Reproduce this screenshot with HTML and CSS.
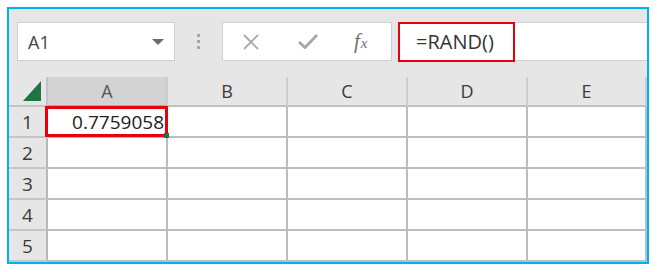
FILE: index.html
```html
<!DOCTYPE html>
<html lang="en">
<head>
    <meta charset="UTF-8">
    <meta name="viewport" content="width=device-width, initial-scale=1.0">
    <title>RAND</title>
    <link rel="stylesheet" href="styles.css">
</head>
<body>
    <div class="frame">
        <div class="toolbar">
            <div class="namebox">
                <span>A1</span>
                <svg width="12" height="6" viewBox="0 0 12 6"><path d="M0 0 H12 L6 6 Z" fill="#6a6a6a"/></svg>
            </div>
            <div class="grip"><i></i><i></i><i></i></div>
            <div class="fbuttons">
                <svg class="icon-x" width="16" height="16" viewBox="0 0 16 16"><path d="M1 1 L15 15 M15 1 L1 15" stroke="#a8a8a8" stroke-width="1.8" fill="none"/></svg>
                <svg class="icon-ok" width="20" height="15" viewBox="0 0 20 15"><path d="M1 8 L7 13.5 L19 1" stroke="#a8a8a8" stroke-width="3" fill="none"/></svg>
                <span class="fx"><i>f</i><i class="x">x</i></span>
            </div>
            <div class="formula">
                <div class="formula-text">=RAND()</div>
            </div>
        </div>

        <div class="sheet">
            <div class="corner">
                <svg width="18" height="20" viewBox="0 0 18 20"><path d="M18 0 V20 H0 Z" fill="#217346"/></svg>
            </div>
            <div class="colhead selected">A</div>
            <div class="colhead">B</div>
            <div class="colhead">C</div>
            <div class="colhead">D</div>
            <div class="colhead">E</div>

            <div class="rowhead">1</div>
            <div class="cell active">0.7759058<span class="selection"><b></b></span></div>
            <div class="cell"></div><div class="cell"></div><div class="cell"></div><div class="cell"></div>

            <div class="rowhead">2</div>
            <div class="cell"></div><div class="cell"></div><div class="cell"></div><div class="cell"></div><div class="cell"></div>

            <div class="rowhead">3</div>
            <div class="cell"></div><div class="cell"></div><div class="cell"></div><div class="cell"></div><div class="cell"></div>

            <div class="rowhead">4</div>
            <div class="cell"></div><div class="cell"></div><div class="cell"></div><div class="cell"></div><div class="cell"></div>

            <div class="rowhead">5</div>
            <div class="cell"></div><div class="cell"></div><div class="cell"></div><div class="cell"></div><div class="cell"></div>
        </div>
    </div>
</body>
</html>
```

FILE: styles.css
```css
body {
    margin: 0;
    background: #fff;
    font-family: "Open Sans", "Noto Sans", sans-serif;
    color: #333;
}

.frame {
    margin: 7px 0 0 7px;
    width: 642px;
    height: 257px;
    border: 2px solid #00b0f0;
    box-sizing: border-box;
    background: #e6e6e6;
    overflow: hidden;
}

.toolbar {
    display: flex;
    align-items: flex-start;
    height: 68px;
    padding: 13px 0 0 8px;
    box-sizing: border-box;
}

.namebox {
    width: 158px;
    height: 39px;
    box-sizing: border-box;
    border: 1px solid #d0d0d0;
    background: #fff;
    display: flex;
    align-items: center;
    justify-content: space-between;
    padding: 0 10px 0 10px;
    font-size: 18px;
    color: #444;
}

.grip {
    width: 47px;
    height: 39px;
    display: flex;
    flex-direction: column;
    align-items: center;
    justify-content: center;
    gap: 3px;
}

.grip i {
    width: 3px;
    height: 3px;
    background: #a6a6a6;
}

.fbuttons {
    width: 170px;
    height: 39px;
    box-sizing: border-box;
    border: 1px solid #d0d0d0;
    background: #fff;
    display: flex;
    align-items: center;
    padding-left: 20px;
}

.icon-x { margin-right: 39px; }
.icon-ok { margin-right: 36px; }

.fx {
    font-family: "Liberation Serif", serif;
    font-size: 21px;
    color: #707070;
}

.fx i { font-style: italic; }
.fx .x { font-size: 15px; margin-left: 1px; }

.formula {
    flex: 1;
    height: 39px;
    margin-left: 6px;
    background: #fff;
    border-top: 1px solid #d0d0d0;
    border-bottom: 1px solid #d0d0d0;
    box-sizing: border-box;
    position: relative;
}

.formula-text {
    position: absolute;
    left: 0;
    top: -1px;
    width: 117px;
    height: 40px;
    box-sizing: border-box;
    border: 2px solid #e8000b;
    padding-left: 16px;
    font-size: 20px;
    line-height: 36px;
    color: #333;
}

.sheet {
    display: grid;
    grid-template-columns: 39px repeat(4, 120px) 119px;
    grid-template-rows: 30px repeat(5, 31px);
}

.corner {
    display: flex;
    align-items: flex-end;
    justify-content: flex-end;
    padding: 0 5px 4px 0;
    border-right: 2px solid #c4c4c4;
    border-bottom: 2px solid #c4c4c4;
}

.colhead {
    display: flex;
    align-items: center;
    justify-content: center;
    font-size: 18px;
    color: #3a3a3a;
    border-right: 2px solid #cdcdcd;
    border-bottom: 2px solid #bfbfbf;
}

.colhead.selected {
    background: #d3d3d3;
    border-bottom-color: #a9a9a9;
    color: #555;
}

.rowhead {
    display: flex;
    align-items: center;
    justify-content: center;
    font-size: 19px;
    color: #3a3a3a;
    border-right: 2px solid #b8b8b8;
    border-bottom: 2px solid #c6c6c6;
}

.cell {
    background: #fff;
    border-right: 2px solid #bdbdbd;
    border-bottom: 2px solid #bdbdbd;
}

.cell.active {
    position: relative;
    display: flex;
    align-items: center;
    justify-content: flex-end;
    padding-right: 2px;
    font-size: 19px;
    color: #222;
}

.selection {
    position: absolute;
    top: -1px;
    right: -2px;
    bottom: -1px;
    left: -3px;
    border: 3px solid #e8000b;
}

.selection b {
    position: absolute;
    right: -4px;
    bottom: -4px;
    width: 5px;
    height: 5px;
    background: #217346;
}
```
